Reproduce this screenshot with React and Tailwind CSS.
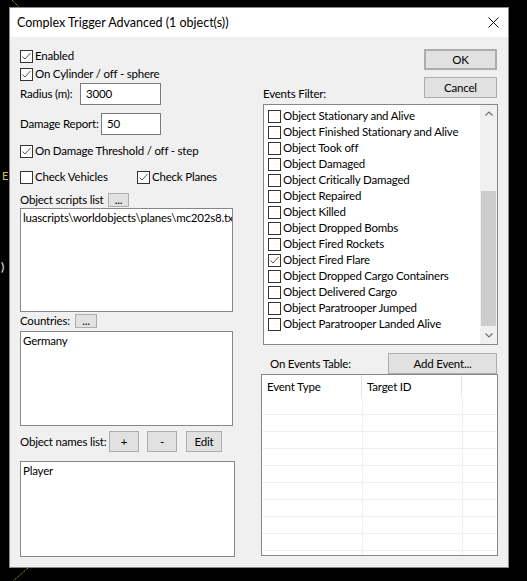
import React from "react";

const EVENTS = [
  ["Object Stationary and Alive", false],
  ["Object Finished Stationary and Alive", false],
  ["Object Took off", false],
  ["Object Damaged", false],
  ["Object Critically Damaged", false],
  ["Object Repaired", false],
  ["Object Killed", false],
  ["Object Dropped Bombs", false],
  ["Object Fired Rockets", false],
  ["Object Fired Flare", true],
  ["Object Dropped Cargo Containers", false],
  ["Object Delivered Cargo", false],
  ["Object Paratrooper Jumped", false],
  ["Object Paratrooper Landed Alive", false],
];

function Box({ checked }) {
  return (
    <span className="flex h-[13px] w-[13px] shrink-0 items-center justify-center border border-[#333] bg-white">
      {checked && (
        <svg width="11" height="11" viewBox="0 0 11 11" aria-hidden>
          <path d="M1.5 5.5 L4 8 L9.5 2" fill="none" stroke="#555" strokeWidth="1" />
        </svg>
      )}
    </span>
  );
}

function Check({ label, checked, className = "" }) {
  return (
    <div className={`flex h-[18px] items-center gap-[2px] whitespace-nowrap ${className}`}>
      <Box checked={checked} />
      <span>{label}</span>
    </div>
  );
}

function Btn({ children, className = "" }) {
  return (
    <div
      className={`flex items-center justify-center whitespace-nowrap border border-[#adadad] bg-[#e1e1e1] ${className}`}
    >
      {children}
    </div>
  );
}

function Chevron({ up }) {
  return (
    <svg width="8" height="5" viewBox="0 0 8 5" aria-hidden>
      <path
        d={up ? "M0.5 4.5 L4 1 L7.5 4.5" : "M0.5 0.5 L4 4 L7.5 0.5"}
        fill="none"
        stroke="#707070"
        strokeWidth="1.2"
      />
    </svg>
  );
}

export default function App() {
  return (
    <div className="relative h-[581px] w-[527px] overflow-hidden bg-black pl-[9px] pt-[7px] font-['Lato',sans-serif] text-[11.5px] leading-[16px] tracking-[-0.2px] text-black">
      {/* stuff behind the dialog */}
      <svg className="absolute left-0 top-0" width="527" height="581" aria-hidden>
        <line x1="12" y1="0" x2="19" y2="7" stroke="#b8b82a" strokeDasharray="1 1" />
        <line x1="28" y1="568" x2="13" y2="581" stroke="#b8b82a" strokeDasharray="1 1" />
      </svg>
      <span className="absolute left-[2px] top-[168px] text-[11px] text-[#c8c83a]">E</span>
      <span className="absolute left-[1px] top-[259px] text-[12px] text-white">)</span>

      <div className="relative flex h-[561px] w-[500px] flex-col border border-[#8a8a8a] bg-[#f0f0f0]">
        {/* title bar */}
        <div className="flex h-[29px] items-center justify-between bg-white pl-[7px]">
          <span className="whitespace-nowrap text-[12.5px] tracking-normal">
            Complex Trigger Advanced (1 object(s))
          </span>
          <svg className="mr-[9px]" width="11" height="11" viewBox="0 0 11 11" aria-hidden>
            <path d="M0.5 0.5 L10.5 10.5 M10.5 0.5 L0.5 10.5" stroke="#111" strokeWidth="1" />
          </svg>
        </div>

        <div className="flex flex-1 pl-[10px]">
          {/* left column */}
          <div className="flex w-[241px] flex-col whitespace-nowrap pt-[10px]">
            <Check label="Enabled" checked />
            <Check label="On Cylinder / off - sphere" checked />
            <div className="flex h-[22px] items-center">
              <span className="w-[60px]">Radius (m):</span>
              <div className="flex h-[22px] w-[81px] items-center border border-[#7a7a7a] bg-white pl-[5px]">
                3000
              </div>
            </div>
            <div className="mt-[8px] flex h-[22px] items-center">
              <span className="w-[81px]">Damage Report:</span>
              <div className="flex h-[22px] w-[60px] items-center border border-[#7a7a7a] bg-white pl-[5px]">
                50
              </div>
            </div>
            <Check className="mt-[7px]" label="On Damage Threshold / off - step" checked />
            <div className="mt-[8px] flex">
              <Check className="w-[117px]" label="Check Vehicles" />
              <Check label="Check Planes" checked />
            </div>

            <div className="mt-[6px] flex h-[15px] items-end">
              <span className="w-[88px] leading-[15px]">Object scripts list</span>
              <Btn className="h-[14px] w-[21px] leading-[10px]">...</Btn>
            </div>
            <div className="mt-[1px] h-[104px] w-[213px] overflow-hidden border border-[#828790] bg-white px-[2px] pt-[1px]">
              luascripts\worldobjects\planes\mc202s8.txt
            </div>

            <div className="mt-[2px] flex h-[14px] items-end">
              <span className="w-[55px] leading-[14px]">Countries:</span>
              <Btn className="h-[14px] w-[22px] leading-[10px]">...</Btn>
            </div>
            <div className="mt-[3px] h-[95px] w-[213px] border border-[#828790] bg-white px-[2px] pt-[1px]">
              Germany
            </div>

            <div className="mt-[5px] flex h-[21px] items-center">
              <span className="w-[89px]">Object names list:</span>
              <Btn className="h-[21px] w-[30px]">+</Btn>
              <Btn className="ml-[8px] h-[21px] w-[30px]">-</Btn>
              <Btn className="ml-[9px] h-[21px] w-[36px]">Edit</Btn>
            </div>
            <div className="mt-[9px] h-[96px] w-[215px] border border-[#828790] bg-white px-[2px] pt-[1px]">
              Player
            </div>
          </div>

          {/* right column */}
          <div className="flex w-[237px] flex-col whitespace-nowrap pt-[12px]">
            <div className="flex items-end justify-between">
              <span className="pl-[2px]">Events Filter:</span>
              <div className="flex flex-col gap-[7px] pb-[4px] pr-[1px]">
                <Btn className="h-[21px] w-[73px] border-2 border-[#0078d7]">OK</Btn>
                <Btn className="h-[21px] w-[73px]">Cancel</Btn>
              </div>
            </div>

            <div className="ml-[2px] mt-[2px] flex h-[241px] w-[235px] border border-[#828790] bg-white">
              <div className="flex-1 overflow-hidden pl-[4px] pt-[3px]">
                {EVENTS.map(([label, checked]) => (
                  <div key={label} className="flex h-[16px] items-center gap-[2px]">
                    <Box checked={checked} />
                    <span>{label}</span>
                  </div>
                ))}
              </div>
              <div className="flex w-[17px] flex-col bg-[#f0f0f0]">
                <div className="flex h-[17px] items-center justify-center">
                  <Chevron up />
                </div>
                <div className="flex flex-1 flex-col">
                  <div className="h-[69px]" />
                  <div className="mx-[1px] h-[135px] bg-[#cdcdcd]" />
                </div>
                <div className="flex h-[17px] items-center justify-center">
                  <Chevron />
                </div>
              </div>
            </div>

            <div className="mt-[8px] flex h-[21px] items-center justify-between">
              <span className="pl-[9px]">On Events Table:</span>
              <Btn className="mr-[1px] h-[21px] w-[109px]">Add Event...</Btn>
            </div>

            <div className="flex h-[182px] w-[237px] flex-col overflow-hidden border border-[#828790] bg-white">
              <div className="flex h-[23px] shrink-0">
                <div className="flex w-[100px] items-center border-r border-[#e5e5e5] pl-[5px]">Event Type</div>
                <div className="flex w-[100px] items-center border-r border-[#e5e5e5] pl-[5px]">Target ID</div>
                <div className="flex-1" />
              </div>
              {Array.from({ length: 10 }).map((_, i) => (
                <div key={i} className="flex h-[17px] shrink-0 border-b border-[#f0f0f0]">
                  <div className="w-[101px] border-r border-[#f0f0f0]" />
                  <div className="w-[100px] border-r border-[#f0f0f0]" />
                  <div className="flex-1" />
                </div>
              ))}
            </div>
          </div>
        </div>
      </div>
    </div>
  );
}
